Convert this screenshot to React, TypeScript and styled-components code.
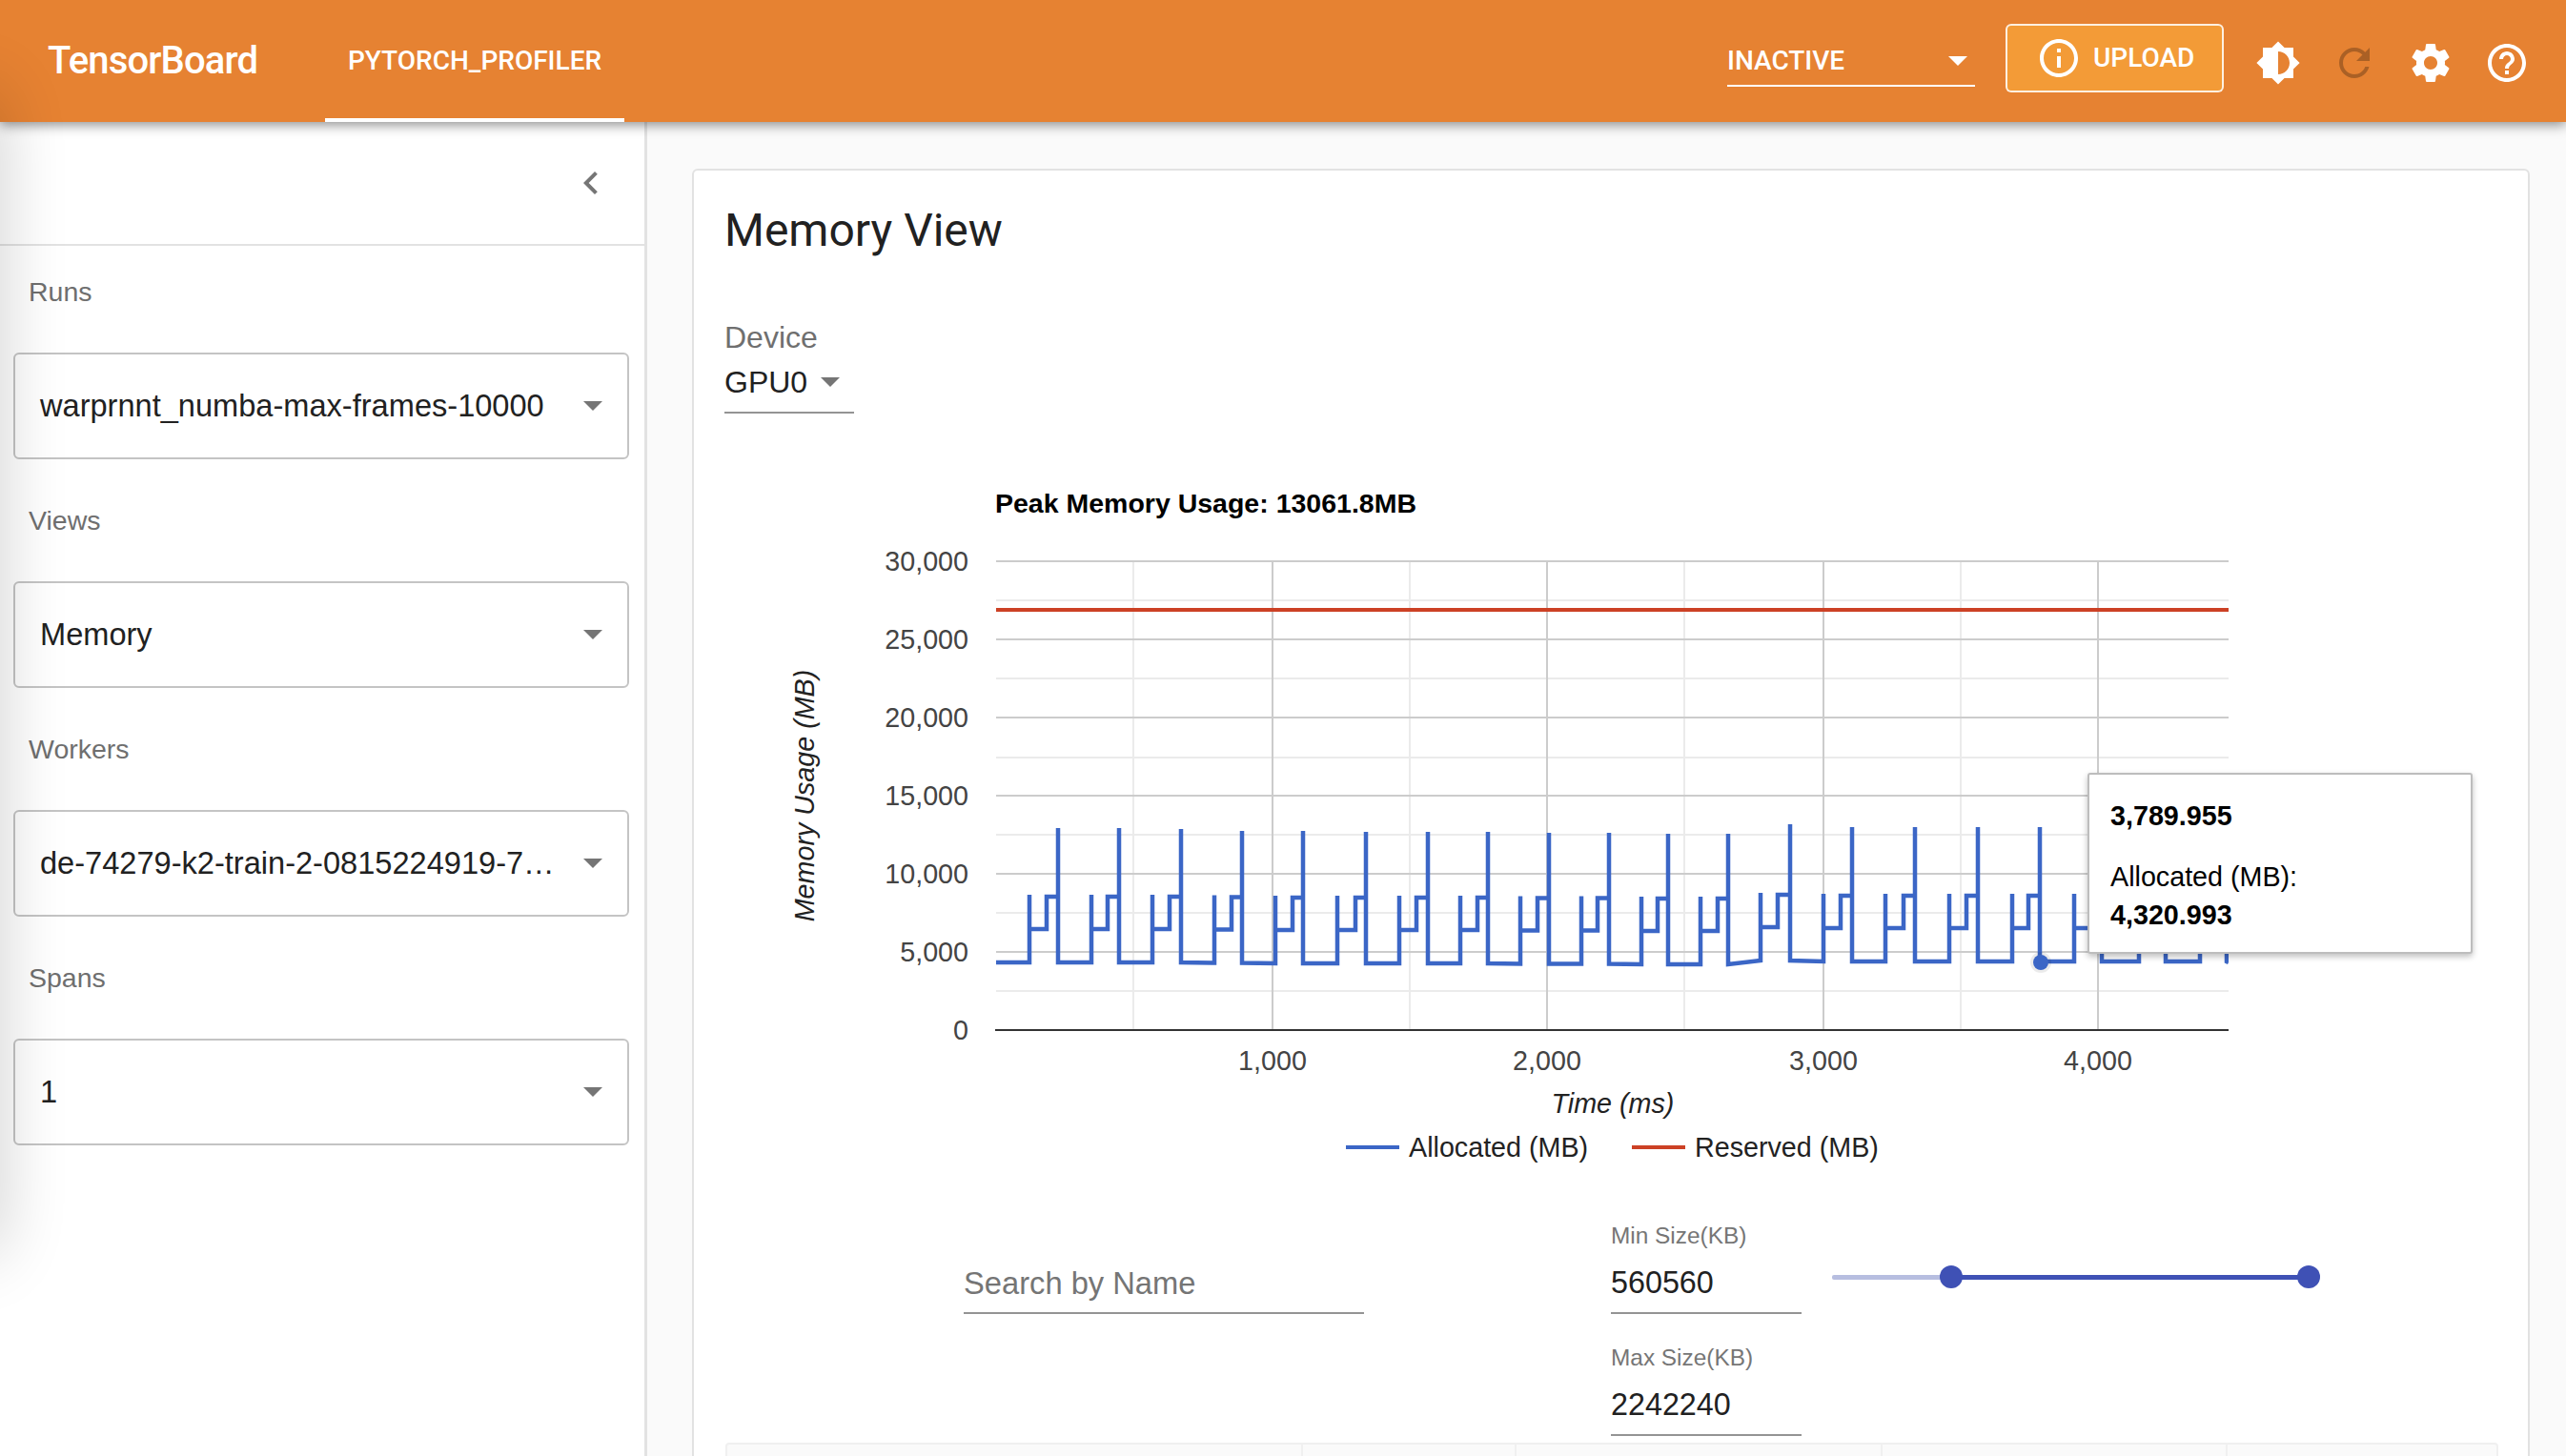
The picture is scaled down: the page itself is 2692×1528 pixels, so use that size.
import React from "react";
import styled, { createGlobalStyle } from "styled-components";

const Global = createGlobalStyle`
  html, body { margin: 0; padding: 0; background: #fff; }
  body { font-family: "Liberation Sans", Arial, sans-serif; }
  * { box-sizing: border-box; }
`;

const Page = styled.div`
  position: relative;
  width: 2692px;
  height: 1528px;
  overflow: hidden;
  display: flex;
  flex-direction: column;
`;

const EdgeShadow = styled.div`
  position: absolute;
  left: -60px;
  top: 90px;
  width: 60px;
  height: 1230px;
  border-radius: 30px;
  box-shadow: 0 0 70px rgba(0, 0, 0, 0.2);
  z-index: 3;
  pointer-events: none;
`;

const Header = styled.header`
  position: relative;
  z-index: 2;
  flex: none;
  height: 128px;
  display: flex;
  align-items: stretch;
  padding: 0 22px 0 50px;
  background: #e68232;
  color: #fff;
  box-shadow: 0 3px 12px rgba(0, 0, 0, 0.45);
`;

const Brand = styled.div`
  width: 220px;
  margin-right: 71px;
  align-self: center;
  font: 500 40px/48px Roboto, sans-serif;
  letter-spacing: -0.85px;
  white-space: nowrap;
`;

const Tab = styled.div`
  width: 314px;
  display: flex;
  align-items: center;
  justify-content: center;
  border-bottom: 4px solid #fff;
  padding-top: 4px;
  font: 500 28px/32px Roboto, sans-serif;
`;

const HeaderRight = styled.div`
  margin-left: auto;
  display: flex;
  align-items: center;
`;

const InactiveSelect = styled.div`
  width: 260px;
  height: 46px;
  margin-top: 8px;
  margin-right: 32px;
  display: flex;
  align-items: center;
  justify-content: space-between;
  padding: 0 8px 6px 0;
  border-bottom: 2px solid #fff;
  font: 500 28px/32px Roboto, sans-serif;
`;

const Caret = styled.span<{ $color: string }>`
  width: 0;
  height: 0;
  border-left: 10px solid transparent;
  border-right: 10px solid transparent;
  border-top: 10px solid ${(p) => p.$color};
`;

const UploadButton = styled.div`
  width: 229px;
  height: 72px;
  margin-top: -6px;
  margin-right: 17px;
  display: flex;
  align-items: center;
  gap: 12px;
  padding-left: 38px;
  background: #f39b37;
  border: 2px solid rgba(255, 255, 255, 0.85);
  border-radius: 6px;
  font: 500 28px/32px Roboto, sans-serif;
  svg { margin-left: -8px; }
`;

const IconButton = styled.div<{ $dim?: boolean }>`
  width: 80px;
  height: 48px;
  margin-top: 4px;
  display: flex;
  align-items: center;
  justify-content: center;
  color: ${(p) => (p.$dim ? "rgba(0,0,0,0.26)" : "#fff")};
`;

const Body = styled.div`
  flex: 1;
  min-height: 0;
  display: flex;
`;

const Sidebar = styled.aside`
  flex: none;
  width: 679px;
  background: #fff;
  border-right: 3px solid #e2e2e2;
`;

const CollapseBar = styled.div`
  height: 130px;
  display: flex;
  align-items: flex-start;
  justify-content: flex-end;
  padding: 40px 32px 0 0;
  border-bottom: 2px solid #e2e2e2;
  color: #757575;
`;

const Field = styled.div`
  height: 240px;
  padding: 30px 16px 0 14px;
`;

const FieldLabel = styled.div`
  height: 36px;
  padding-left: 16px;
  margin-bottom: 46px;
  font-size: 28.5px;
  line-height: 36px;
  color: #6f6f6f;
`;

const SelectBox = styled.div`
  height: 112px;
  display: flex;
  align-items: center;
  justify-content: space-between;
  padding: 0 26px 0 26px;
  background: #fff;
  border: 2px solid #c4c4c4;
  border-radius: 6px;
`;

const SelectValue = styled.span`
  white-space: nowrap;
  font-size: 32.6px;
  line-height: 40px;
  color: #212121;
`;

const Main = styled.main`
  flex: 1;
  min-width: 0;
  padding: 49px 38px 0 47px;
  background: #fafafa;
  overflow: hidden;
`;

const Card = styled.section`
  padding: 35px 32px 0 32px;
  background: #fff;
  border: 2px solid #e2e2e2;
  border-radius: 6px;
`;

const Title = styled.h1`
  margin: 0 0 66px;
  font: 400 48px/56px Roboto, sans-serif;
  color: #212121;
`;

const DeviceLabel = styled.div`
  font-size: 32px;
  line-height: 36px;
  color: #6f6f6f;
`;

const DeviceSelect = styled.div`
  width: 136px;
  height: 62px;
  display: flex;
  align-items: center;
  gap: 14px;
  padding-bottom: 2px;
  border-bottom: 2px solid #949494;
  font-size: 32px;
  color: #212121;
`;

const ChartWrap = styled.div`
  position: relative;
  width: 1860px;
  height: 848px;
`;

const ChartSvg = styled.svg`
  display: block;
  text {
    font-family: "Liberation Sans", Arial, sans-serif;
    font-size: 28.7px;
    fill: #444;
  }
  text.dark { fill: #222; }
  text.heading { fill: #000; font-size: 28.5px; font-weight: 700; }
`;

const Tooltip = styled.div`
  position: absolute;
  left: 1430px;
  top: 377px;
  width: 404px;
  height: 190px;
  padding: 23px 22px;
  background: #fff;
  border: 2px solid #bdbdbd;
  border-radius: 3px;
  box-shadow: 0 3px 6px rgba(0, 0, 0, 0.25);
  font-size: 28.7px;
  line-height: 40px;
  color: #000;
`;

const TooltipValue = styled.div`
  font-weight: 700;
`;

const TooltipLabel = styled.div`
  margin-top: 24px;
`;

const Filters = styled.div`
  display: flex;
  align-items: flex-start;
  padding-left: 251px;
`;

const SearchField = styled.div`
  width: 420px;
  height: 67px;
  margin-top: 30px;
  margin-right: 259px;
  display: flex;
  align-items: center;
  border-bottom: 2px solid #949494;
  padding-top: 4px;
  font-size: 32.7px;
  color: #757575;
`;

const SizeColumn = styled.div`
  width: 200px;
  margin-right: 32px;
  display: flex;
  flex-direction: column;
  gap: 31px;
`;

const SizeLabel = styled.div`
  font-size: 24.4px;
  line-height: 30px;
  color: #767676;
`;

const SizeValue = styled.div`
  height: 67px;
  display: flex;
  align-items: center;
  padding-top: 4px;
  border-bottom: 2px solid #949494;
  font-size: 32.3px;
  color: #212121;
`;

const Slider = styled.div`
  position: relative;
  width: 512px;
  height: 24px;
  margin-top: 46px;
`;

const Rail = styled.div`
  position: absolute;
  left: 0;
  right: 0;
  top: 10px;
  height: 5px;
  border-radius: 2px;
  background: #b7bee0;
`;

const Range = styled.div`
  position: absolute;
  left: 125px;
  width: 375px;
  top: 10px;
  height: 5px;
  background: #3f51b5;
`;

const Thumb = styled.div<{ $left: number }>`
  position: absolute;
  left: ${(p) => p.$left}px;
  top: 0;
  width: 24px;
  height: 24px;
  border-radius: 50%;
  background: #3f51b5;
`;

const TableHead = styled.div`
  margin: 7px -1px 0 1px;
  height: 80px;
  display: grid;
  grid-template-columns: 604px 224px 384px 362px 1fr;
  background: #fafafa;
  border: 2px solid #f0f0f0;
  border-radius: 4px 4px 0 0;
`;

const HeadCell = styled.div`
  border-right: 2px solid #f0f0f0;
  &:last-child { border-right: none; }
`;

const ICONS = {
  info: "M11 7h2v2h-2zm0 4h2v6h-2zm1-9C6.48 2 2 6.48 2 12s4.48 10 10 10 10-4.48 10-10S17.52 2 12 2zm0 18c-4.41 0-8-3.59-8-8s3.59-8 8-8 8 3.59 8 8-3.59 8-8 8z",
  brightness: "M20 15.31L23.31 12 20 8.69V4h-4.69L12 .69 8.69 4H4v4.69L.69 12 4 15.31V20h4.69L12 23.31 15.31 20H20v-4.69zM12 18V6c3.31 0 6 2.69 6 6s-2.69 6-6 6z",
  refresh: "M17.65 6.35C16.2 4.9 14.21 4 12 4c-4.42 0-7.99 3.58-7.99 8s3.57 8 7.99 8c3.73 0 6.84-2.55 7.73-6h-2.08c-.82 2.33-3.04 4-5.65 4-3.31 0-6-2.69-6-6s2.69-6 6-6c1.66 0 3.14.69 4.22 1.78L13 11h7V4l-2.35 2.35z",
  settings: "M19.43 12.98c.04-.32.07-.64.07-.98s-.03-.66-.07-.98l2.11-1.65c.19-.15.24-.42.12-.64l-2-3.46c-.12-.22-.39-.3-.61-.22l-2.49 1c-.52-.4-1.08-.73-1.69-.98l-.38-2.65C14.46 2.18 14.25 2 14 2h-4c-.25 0-.46.18-.49.42l-.38 2.65c-.61.25-1.17.59-1.69.98l-2.49-1c-.23-.09-.49 0-.61.22l-2 3.46c-.13.22-.07.49.12.64l2.11 1.65c-.04.32-.07.65-.07.98s.03.66.07.98l-2.11 1.65c-.19.15-.24.42-.12.64l2 3.46c.12.22.39.3.61.22l2.49-1c.52.4 1.08.73 1.69.98l.38 2.65c.03.24.24.42.49.42h4c.25 0 .46-.18.49-.42l.38-2.65c.61-.25 1.17-.59 1.69-.98l2.49 1c.23.09.49 0 .61-.22l2-3.46c.12-.22.07-.49-.12-.64l-2.11-1.65zM12 15.5c-1.93 0-3.5-1.57-3.5-3.5s1.57-3.5 3.5-3.5 3.5 1.57 3.5 3.5-1.57 3.5-3.5 3.5z",
  help: "M11 18h2v-2h-2v2zm1-16C6.48 2 2 6.48 2 12s4.48 10 10 10 10-4.48 10-10S17.52 2 12 2zm0 18c-4.41 0-8-3.59-8-8s3.59-8 8-8 8 3.59 8 8-3.59 8-8 8zm0-14c-2.21 0-4 1.79-4 4h2c0-1.1.9-2 2-2s2 .9 2 2c0 2-3 1.75-3 5h2c0-2.25 3-2.5 3-5 0-2.21-1.79-4-4-4z",
  chevron: "M15.41 7.41L14 6l-6 6 6 6 1.41-1.41L10.83 12z",
};

const Icon = ({ d }: { d: string }) => (
  <svg width={48} height={48} viewBox="0 0 24 24" fill="currentColor">
    <path d={d} />
  </svg>
);

// rise x, step x, spike x, spike top y, vertical offset of the cycle
const CYCLES: number[][] = [
  [1080, 1098, 1110, 869, 0], [1145, 1162, 1174, 869, 0], [1209, 1227, 1239, 870, 0],
  [1274, 1292, 1303, 872, 0.5], [1338, 1356, 1367, 872, 1], [1403, 1422, 1433, 873, 1],
  [1468, 1486, 1498, 873, 1], [1532, 1550, 1561, 873, 1], [1595, 1613, 1625, 874, 1.5],
  [1659, 1676, 1688, 874, 1.5], [1722, 1739, 1750, 875, 2], [1784, 1802, 1813, 875, 2],
  [1847, 1865, 1878, 865, -2], [1913, 1931, 1943, 868, -1], [1978, 1997, 2009, 868, -1],
  [2045, 2063, 2075, 868, -1], [2111, 2128, 2140, 868, -1], [2176, 2194, 2205, 868, -1],
  [2244, 2261, 2272, 868, -1], [2308, 2326, 2336, 868, -1],
];

const tracePath = () => {
  let d = "M1045 1010";
  for (const [r, m, s, top, o] of CYCLES) {
    const base = 1010 + o;
    const mid = 975 + o;
    const high = 941 + o;
    d += ` L${r} ${base} L${r} ${high - 2} L${r} ${mid} L${m} ${mid} L${m} ${high} L${s} ${high} L${s} ${top} L${s} ${base}`;
  }
  return d + " L2338 1010";
};

const YMAJOR = [
  [589, "30,000"], [671, "25,000"], [753, "20,000"], [835, "15,000"], [917, "10,000"], [999, "5,000"], [1081, "0"],
] as const;
const YMINOR = [630, 712, 795, 876, 958, 1040];
const XMAJOR = [
  [1335, "1,000"], [1623, "2,000"], [1913, "3,000"], [2201, "4,000"],
] as const;
const XMINOR = [1189, 1479, 1767, 2057];

const MemoryChart = () => (
  <ChartSvg width={1860} height={848} viewBox="760 434 1860 848">
    <defs>
      <clipPath id="plot">
        <rect x={1045} y={580} width={1293} height={501} />
      </clipPath>
    </defs>
    <text className="heading" x={1044} y={538}>Peak Memory Usage: 13061.8MB</text>
    {YMINOR.map((y) => <line key={y} x1={1045} x2={2338} y1={y} y2={y} stroke="#ebebeb" strokeWidth={2} />)}
    {XMINOR.map((x) => <line key={x} x1={x} x2={x} y1={589} y2={1081} stroke="#ebebeb" strokeWidth={2} />)}
    {YMAJOR.slice(0, 6).map(([y]) => <line key={y} x1={1045} x2={2338} y1={y} y2={y} stroke="#cccccc" strokeWidth={2} />)}
    {XMAJOR.map(([x]) => <line key={x} x1={x} x2={x} y1={589} y2={1081} stroke="#cccccc" strokeWidth={2} />)}
    <line x1={1044} x2={2338} y1={1081} y2={1081} stroke="#333" strokeWidth={2} />
    {YMAJOR.map(([y, t]) => <text key={t} x={1016} y={y + 10} textAnchor="end">{t}</text>)}
    {XMAJOR.map(([x, t]) => <text key={t} x={x} y={1123} textAnchor="middle">{t}</text>)}
    <line x1={1045} x2={2338} y1={640} y2={640} stroke="#cc4125" strokeWidth={4} />
    <g clipPath="url(#plot)">
      <path d={tracePath()} fill="none" stroke="#3b66c6" strokeWidth={4.5} strokeLinejoin="miter" />
    </g>
    <circle cx={2141} cy={1010} r={11} fill="#000" opacity={0.08} />
    <circle cx={2141} cy={1010} r={8} fill="#3b66c6" />
    <text className="dark" x={1692} y={1168} textAnchor="middle" fontStyle="italic">Time (ms)</text>
    <text className="dark" transform="rotate(-90 854 835)" x={854} y={835} textAnchor="middle" fontStyle="italic">Memory Usage (MB)</text>
    <line x1={1412} x2={1468} y1={1204} y2={1204} stroke="#3b66c6" strokeWidth={4} />
    <text className="dark" x={1478} y={1214}>Allocated (MB)</text>
    <line x1={1712} x2={1768} y1={1204} y2={1204} stroke="#cc4125" strokeWidth={4} />
    <text className="dark" x={1778} y={1214}>Reserved (MB)</text>
  </ChartSvg>
);

const FIELDS = [
  ["Runs", "warprnnt_numba-max-frames-10000"],
  ["Views", "Memory"],
  ["Workers", "de-74279-k2-train-2-0815224919-7…"],
  ["Spans", "1"],
];

export default function App() {
  return (
    <Page>
      <Global />
      <EdgeShadow />
      <Header>
        <Brand>TensorBoard</Brand>
        <Tab>PYTORCH_PROFILER</Tab>
        <HeaderRight>
          <InactiveSelect>
            INACTIVE
            <Caret $color="#fff" />
          </InactiveSelect>
          <UploadButton>
            <Icon d={ICONS.info} />
            UPLOAD
          </UploadButton>
          <IconButton><Icon d={ICONS.brightness} /></IconButton>
          <IconButton $dim><Icon d={ICONS.refresh} /></IconButton>
          <IconButton><Icon d={ICONS.settings} /></IconButton>
          <IconButton><Icon d={ICONS.help} /></IconButton>
        </HeaderRight>
      </Header>
      <Body>
        <Sidebar>
          <CollapseBar><Icon d={ICONS.chevron} /></CollapseBar>
          {FIELDS.map(([label, value]) => (
            <Field key={label}>
              <FieldLabel>{label}</FieldLabel>
              <SelectBox>
                <SelectValue>{value}</SelectValue>
                <Caret $color="#757575" />
              </SelectBox>
            </Field>
          ))}
        </Sidebar>
        <Main>
          <Card>
            <Title>Memory View</Title>
            <DeviceLabel>Device</DeviceLabel>
            <DeviceSelect>
              GPU0
              <Caret $color="#757575" />
            </DeviceSelect>
            <ChartWrap>
              <MemoryChart />
              <Tooltip>
                <TooltipValue>3,789.955</TooltipValue>
                <TooltipLabel>Allocated (MB):</TooltipLabel>
                <TooltipValue>4,320.993</TooltipValue>
              </Tooltip>
            </ChartWrap>
            <Filters>
              <SearchField>Search by Name</SearchField>
              <SizeColumn>
                <div>
                  <SizeLabel>Min Size(KB)</SizeLabel>
                  <SizeValue>560560</SizeValue>
                </div>
                <div>
                  <SizeLabel>Max Size(KB)</SizeLabel>
                  <SizeValue>2242240</SizeValue>
                </div>
              </SizeColumn>
              <Slider>
                <Rail />
                <Range />
                <Thumb $left={113} />
                <Thumb $left={488} />
              </Slider>
            </Filters>
            <TableHead>
              <HeadCell />
              <HeadCell />
              <HeadCell />
              <HeadCell />
              <HeadCell />
            </TableHead>
          </Card>
        </Main>
      </Body>
    </Page>
  );
}
